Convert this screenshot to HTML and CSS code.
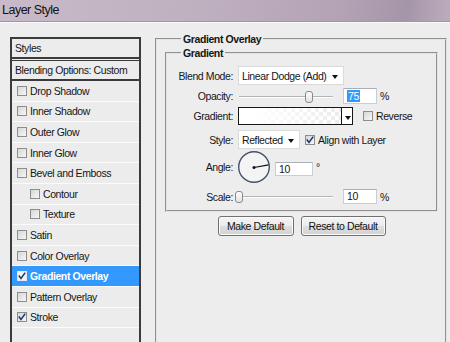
FILE: index.html
```html
<!DOCTYPE html>
<html lang="en">
<head>
  <meta charset="UTF-8" />
  <title>Layer Style</title>
  <meta name="viewport" content="width=device-width, initial-scale=1.0">
  <link rel="stylesheet" href="styles.css">
</head>
<body>
  <div class="titlebar">Layer Style</div>

  <div class="dialog">
    <ul class="styles-list">
      <li class="head">Styles</li>
      <li class="head blend">Blending Options: Custom</li>
      <li><span class="cb"></span>Drop Shadow</li>
      <li><span class="cb"></span>Inner Shadow</li>
      <li><span class="cb"></span>Outer Glow</li>
      <li><span class="cb"></span>Inner Glow</li>
      <li><span class="cb"></span>Bevel and Emboss</li>
      <li class="sub"><span class="cb"></span>Contour</li>
      <li class="sub"><span class="cb"></span>Texture</li>
      <li><span class="cb"></span>Satin</li>
      <li><span class="cb"></span>Color Overlay</li>
      <li class="active"><span class="cb checked"><svg viewBox="0 0 10 10"><path d="M1.8 4.6 L4 7.4 L8.2 1.6" /></svg></span>Gradient Overlay</li>
      <li><span class="cb"></span>Pattern Overlay</li>
      <li><span class="cb checked"><svg viewBox="0 0 10 10"><path d="M1.8 4.6 L4 7.4 L8.2 1.6" /></svg></span>Stroke</li>
      <li class="empty"></li>
    </ul>

    <fieldset class="group outer">
      <legend>Gradient Overlay</legend>

      <fieldset class="group inner">
        <legend>Gradient</legend>
        <div class="rows">
          <div class="row blend-row">
            <span class="label">Blend Mode:</span>
            <div class="select blend-select">Linear Dodge (Add)<span class="arrow"></span></div>
          </div>

          <div class="row opacity-row">
            <span class="label">Opacity:</span>
            <div class="slider"><span class="thumb" style="left: 66px"></span></div>
            <div class="field"><span class="selected">75</span></div>
            <span class="unit">%</span>
          </div>

          <div class="row gradient-row">
            <span class="label">Gradient:</span>
            <div class="gradient-box"></div>
            <div class="gradient-arrow"><span class="arrow"></span></div>
            <span class="cb"></span>
            <span class="check-text">Reverse</span>
          </div>

          <div class="row style-row">
            <span class="label">Style:</span>
            <div class="select style-select">Reflected<span class="arrow"></span></div>
            <span class="cb checked"><svg viewBox="0 0 10 10"><path d="M1.8 4.6 L4 7.4 L8.2 1.6" /></svg></span>
            <span class="check-text">Align with Layer</span>
          </div>

          <div class="row angle-row">
            <span class="label">Angle:</span>
            <svg class="dial" width="34" height="34" viewBox="0 0 34 34">
              <circle cx="17" cy="17" r="15.3" fill="#f4f4f4" stroke="#44516c" stroke-width="1.4" />
              <line x1="17" y1="17.5" x2="31.5" y2="14.8" stroke="#111" stroke-width="1.2" />
              <circle cx="17" cy="17.5" r="1.5" fill="#111" />
            </svg>
            <div class="field angle-field">10</div>
            <span class="unit deg">°</span>
          </div>

          <div class="row scale-row">
            <span class="label">Scale:</span>
            <div class="slider"><span class="thumb" style="left: -4px"></span></div>
            <div class="field">10</div>
            <span class="unit">%</span>
          </div>
        </div>
      </fieldset>

      <div class="buttons">
        <button type="button" class="make">Make Default</button>
        <button type="button" class="reset">Reset to Default</button>
      </div>
    </fieldset>
  </div>
</body>
</html>
```

FILE: styles.css
```css
body {
  margin: 0;
  width: 450px;
  height: 342px;
  overflow: hidden;
  background: #ededed;
  font-family: 'Liberation Sans', Arial, sans-serif;
  font-size: 10.5px;
  letter-spacing: -0.4px;
  color: #161616;
}
.titlebar {
  height: 21px;
  line-height: 20px;
  padding-left: 2px;
  font-size: 12.5px;
  letter-spacing: -0.5px;
  color: #111;
  background: linear-gradient(100deg, #c9bac9 0%, #bfb0c0 45%, #b3a3b5 75%, #a595a8 90%, #bcadbe 100%);
  border-bottom: 1px solid #9c9a9c;
  box-shadow: 0 1px 0 #fafafa;
}
.dialog {
  display: flex;
  gap: 14px;
  padding-left: 10px;
}

/* left list */
.styles-list {
  width: 131px;
  box-sizing: border-box;
  margin: 15px 0 0;
  padding: 0;
  list-style: none;
  border: 2px solid #3b3b3b;
  border-bottom: none;
  background: #ececec;
  flex-shrink: 0;
}
.styles-list li {
  display: flex;
  align-items: center;
  height: 19.6px;
  padding-left: 5px;
  border-bottom: 1px solid #fbfbfb;
  white-space: nowrap;
}
.styles-list li.head {
  height: 18px;
  padding-left: 3px;
  border-bottom: 2px solid #3b3b3b;
}
.styles-list li.blend {
  margin-top: 1px;
  border-top: 1px solid #3b3b3b;
}
.styles-list li.sub {
  padding-left: 18px;
}
.styles-list li.active {
  background: #3399ff;
  color: #fff;
  font-weight: bold;
}
.styles-list li.empty {
  height: 40px;
}
.cb {
  width: 8px;
  height: 8px;
  flex-shrink: 0;
  margin-right: 3px;
  border: 1px solid #8d8d8d;
  background: linear-gradient(135deg, #d6d6d6, #f7f7f7);
  position: relative;
}
.cb svg {
  position: absolute;
  left: -1px;
  top: -1px;
  width: 10px;
  height: 10px;
}
.cb path {
  fill: none;
  stroke: #1f3a78;
  stroke-width: 1.6;
}
.active .cb {
  border-color: #dfe8f3;
  background: #f3f3f3;
}

/* right groups */
.group {
  margin: 0;
  padding: 0;
  min-width: 0;
  border: 2px groove #e4e4e4;
}
.group legend {
  padding: 0 2px;
  font-weight: bold;
  line-height: 12px;
}
.outer {
  width: 292px;
  box-sizing: border-box;
  height: 330px;
  margin-top: 11px;
  padding: 0 7px 0 8px;
}
.outer legend {
  margin-left: 16px;
}
.inner {
  margin-top: 2px;
}
.inner legend {
  margin-left: 14px;
}
.rows {
  padding: 7px 0 6px;
}
.row {
  display: flex;
  align-items: center;
}
.label {
  width: 66px;
  margin-right: 5px;
  text-align: right;
  flex-shrink: 0;
}
.blend-row { height: 19px; }
.opacity-row { height: 16px; margin-top: 3px; }
.gradient-row { height: 18px; margin-top: 3px; }
.style-row { height: 19px; margin-top: 5px; }
.angle-row { height: 32px; margin-top: 2px; }
.scale-row { height: 15px; margin-top: 6px; }

.select {
  position: relative;
  box-sizing: border-box;
  height: 19px;
  line-height: 18px;
  padding-left: 3px;
  background: #fff;
  border: 1px solid #dadada;
}
.blend-select { width: 106px; }
.style-select { width: 62px; margin-right: 5px; }
.arrow {
  position: absolute;
  right: 5px;
  top: 8px;
  border-left: 3.5px solid transparent;
  border-right: 3.5px solid transparent;
  border-top: 4px solid #111;
}

.slider {
  position: relative;
  width: 94px;
  height: 2px;
  margin: 1px 10px 0 1px;
  border-top: 1px solid #b4b4b4;
  border-bottom: 1px solid #fff;
  box-sizing: border-box;
}
.thumb {
  position: absolute;
  top: -6px;
  width: 6px;
  height: 10px;
  border: 1px solid #8a8a8a;
  border-radius: 3px;
  background: linear-gradient(#fdfdfd, #e2e2e2);
}
.field {
  box-sizing: border-box;
  width: 34px;
  height: 15px;
  line-height: 13px;
  padding-left: 3px;
  background: #fff;
  border: 1px solid #c9ced6;
  border-top-color: #aab0b8;
}
.opacity-row .field {
  height: 16px;
  line-height: 14px;
}
.selected {
  background: #3399ff;
  color: #fff;
  padding: 0 1px;
}
.unit {
  margin-left: 3px;
}
.deg {
  align-self: flex-start;
  margin-top: 10px;
}

.gradient-box {
  box-sizing: border-box;
  width: 104px;
  height: 18px;
  border: 1px solid #161616;
  background:
    linear-gradient(to right, #fff 15%, rgba(255,255,255,0.3) 100%),
    repeating-conic-gradient(#e4e4e4 0 25%, #fff 0 50%) 0 0 / 8px 8px;
}
.gradient-arrow {
  position: relative;
  box-sizing: border-box;
  width: 11px;
  height: 18px;
  border: 1px solid #161616;
  border-left: none;
  background: #fff;
  margin-right: 10px;
}
.gradient-arrow .arrow {
  right: 1px;
}
.dial {
  margin-left: -1px;
  margin-right: 4px;
}
.angle-field {
  width: 38px;
  height: 14px;
  margin-top: 4px;
}

.buttons {
  display: flex;
  justify-content: center;
  gap: 7px;
  margin-top: 4px;
}
button {
  height: 20px;
  padding: 0;
  font-family: inherit;
  font-size: 10.5px;
  letter-spacing: -0.4px;
  color: #111;
  border: 1px solid #707070;
  border-radius: 3px;
  background: linear-gradient(#f4f4f4 0%, #ececec 48%, #dedede 52%, #d2d2d2 100%);
  box-shadow: inset 0 0 0 1px #fbfbfb;
}
.make { width: 76px; }
.reset { width: 85px; }
```
